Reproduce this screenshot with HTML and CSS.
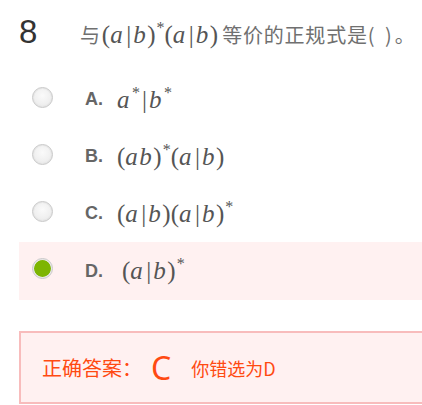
FILE: index.html
```html
<!DOCTYPE html>
<html lang="zh">
<head>
<meta charset="utf-8">
<link rel="stylesheet" href="styles.css">
</head>
<body>
<div class="question">
  <div class="q-head">
    <span class="num">8</span>
    <span class="stem">与<span class="math q-math"><span class="p">(</span><i>a</i><span class="bar">|</span><i>b</i><span class="p">)</span><sup>*</sup><span class="p">(</span><i>a</i><span class="bar">|</span><i>b</i><span class="p">)</span></span>等价的正规式是<span class="tail">( )。</span></span>
  </div>
  <ul class="options">
    <li class="opt">
      <span class="radio"></span>
      <span class="letter">A.</span>
      <span class="math"><i>a</i><sup>*</sup><span class="bar">|</span><i>b</i><sup>*</sup></span>
    </li>
    <li class="opt">
      <span class="radio"></span>
      <span class="letter">B.</span>
      <span class="math"><span class="p">(</span><i>a</i><i>b</i><span class="p">)</span><sup>*</sup><span class="p">(</span><i>a</i><span class="bar">|</span><i>b</i><span class="p">)</span></span>
    </li>
    <li class="opt">
      <span class="radio"></span>
      <span class="letter">C.</span>
      <span class="math"><span class="p">(</span><i>a</i><span class="bar">|</span><i>b</i><span class="p">)</span><span class="p">(</span><i>a</i><span class="bar">|</span><i>b</i><span class="p">)</span><sup>*</sup></span>
    </li>
    <li class="opt opt-selected">
      <span class="radio radio-checked"></span>
      <span class="letter">D.</span>
      <span class="math math-d"><span class="p">(</span><i>a</i><span class="bar">|</span><i>b</i><span class="p">)</span><sup>*</sup></span>
    </li>
  </ul>
  <div class="answer">
    <span class="ans-label">正确答案：</span><span class="ans-key">C</span><span class="ans-wrong">你错选为D</span>
  </div>
</div>
</body>
</html>
```
FILE: styles.css
```css
html, body {
  margin: 0;
  padding: 0;
  overflow: hidden;
  background: #fff;
}

body {
  font-family: "Liberation Sans", Arial, sans-serif;
  color: #333;
}

.question {
  width: 440px;
  padding-top: 12px;
}

.q-head {
  display: flex;
  align-items: baseline;
  padding-left: 19px;
  height: 44px;
}

.num {
  font-size: 33px;
  width: 61px;
  color: #333;
  line-height: 40px;
}

.stem {
  font-family: "Noto Sans CJK SC", sans-serif;
  font-size: 20px;
  color: #707070;
  letter-spacing: 0.8px;
  white-space: nowrap;
}

.tail {
  letter-spacing: 3px;
}

.math {
  font-family: "Liberation Serif", "Times New Roman", serif;
  font-size: 25px;
  color: #555;
  letter-spacing: 0;
}

.math i {
  font-style: italic;
  padding-right: 1.5px;
}

.math .p {
  font-style: normal;
}

.math .bar {
  font-style: normal;
  padding: 0 2px;
}

.math sup {
  font-size: 16px;
  vertical-align: 0;
  position: relative;
  top: -10px;
  line-height: 0;
  padding-left: 1px;
}

.q-math {
  margin: 0 4px 0 1px;
}

.options {
  list-style: none;
  margin: 15px 0 0;
  padding: 0;
}

.opt {
  display: flex;
  align-items: center;
  height: 57px;
  margin-left: 19px;
  padding-left: 13px;
}

.opt-selected {
  background: #fff1f1;
  height: 58px;
}

.radio {
  width: 19px;
  height: 19px;
  border-radius: 50%;
  border: 1px solid #c8c8c8;
  background: radial-gradient(circle at 50% 40%, #fafafa 0%, #f0f0f0 55%, #e2e2e2 100%);
  box-shadow: inset 0 0 0 1px #e6e6e6;
  flex: none;
  margin-top: -5px;
}

.radio-checked {
  background: radial-gradient(circle, #7db503 0%, #7db503 62%, #f5f5f5 66%, #e8e8e8 100%);
}

.letter {
  font-weight: bold;
  font-size: 18px;
  color: #666;
  margin-left: 32px;
  width: 32px;
}

.math-d {
  margin-left: 5px;
}

.answer {
  margin: 31px 0 0 19px;
  height: 69px;
  border: 2px solid #f8bcbc;
  border-right: none;
  background: #fff1f1;
  display: flex;
  align-items: center;
  padding-left: 21px;
  font-family: "Noto Sans CJK SC", sans-serif;
  color: #ff4a12;
}

.ans-label {
  font-size: 20px;
}

.ans-key {
  font-family: "Noto Sans", "Open Sans", sans-serif;
  font-size: 32px;
  margin-left: 9px;
  margin-right: 20px;
}

.ans-wrong {
  font-size: 18px;
}
```
